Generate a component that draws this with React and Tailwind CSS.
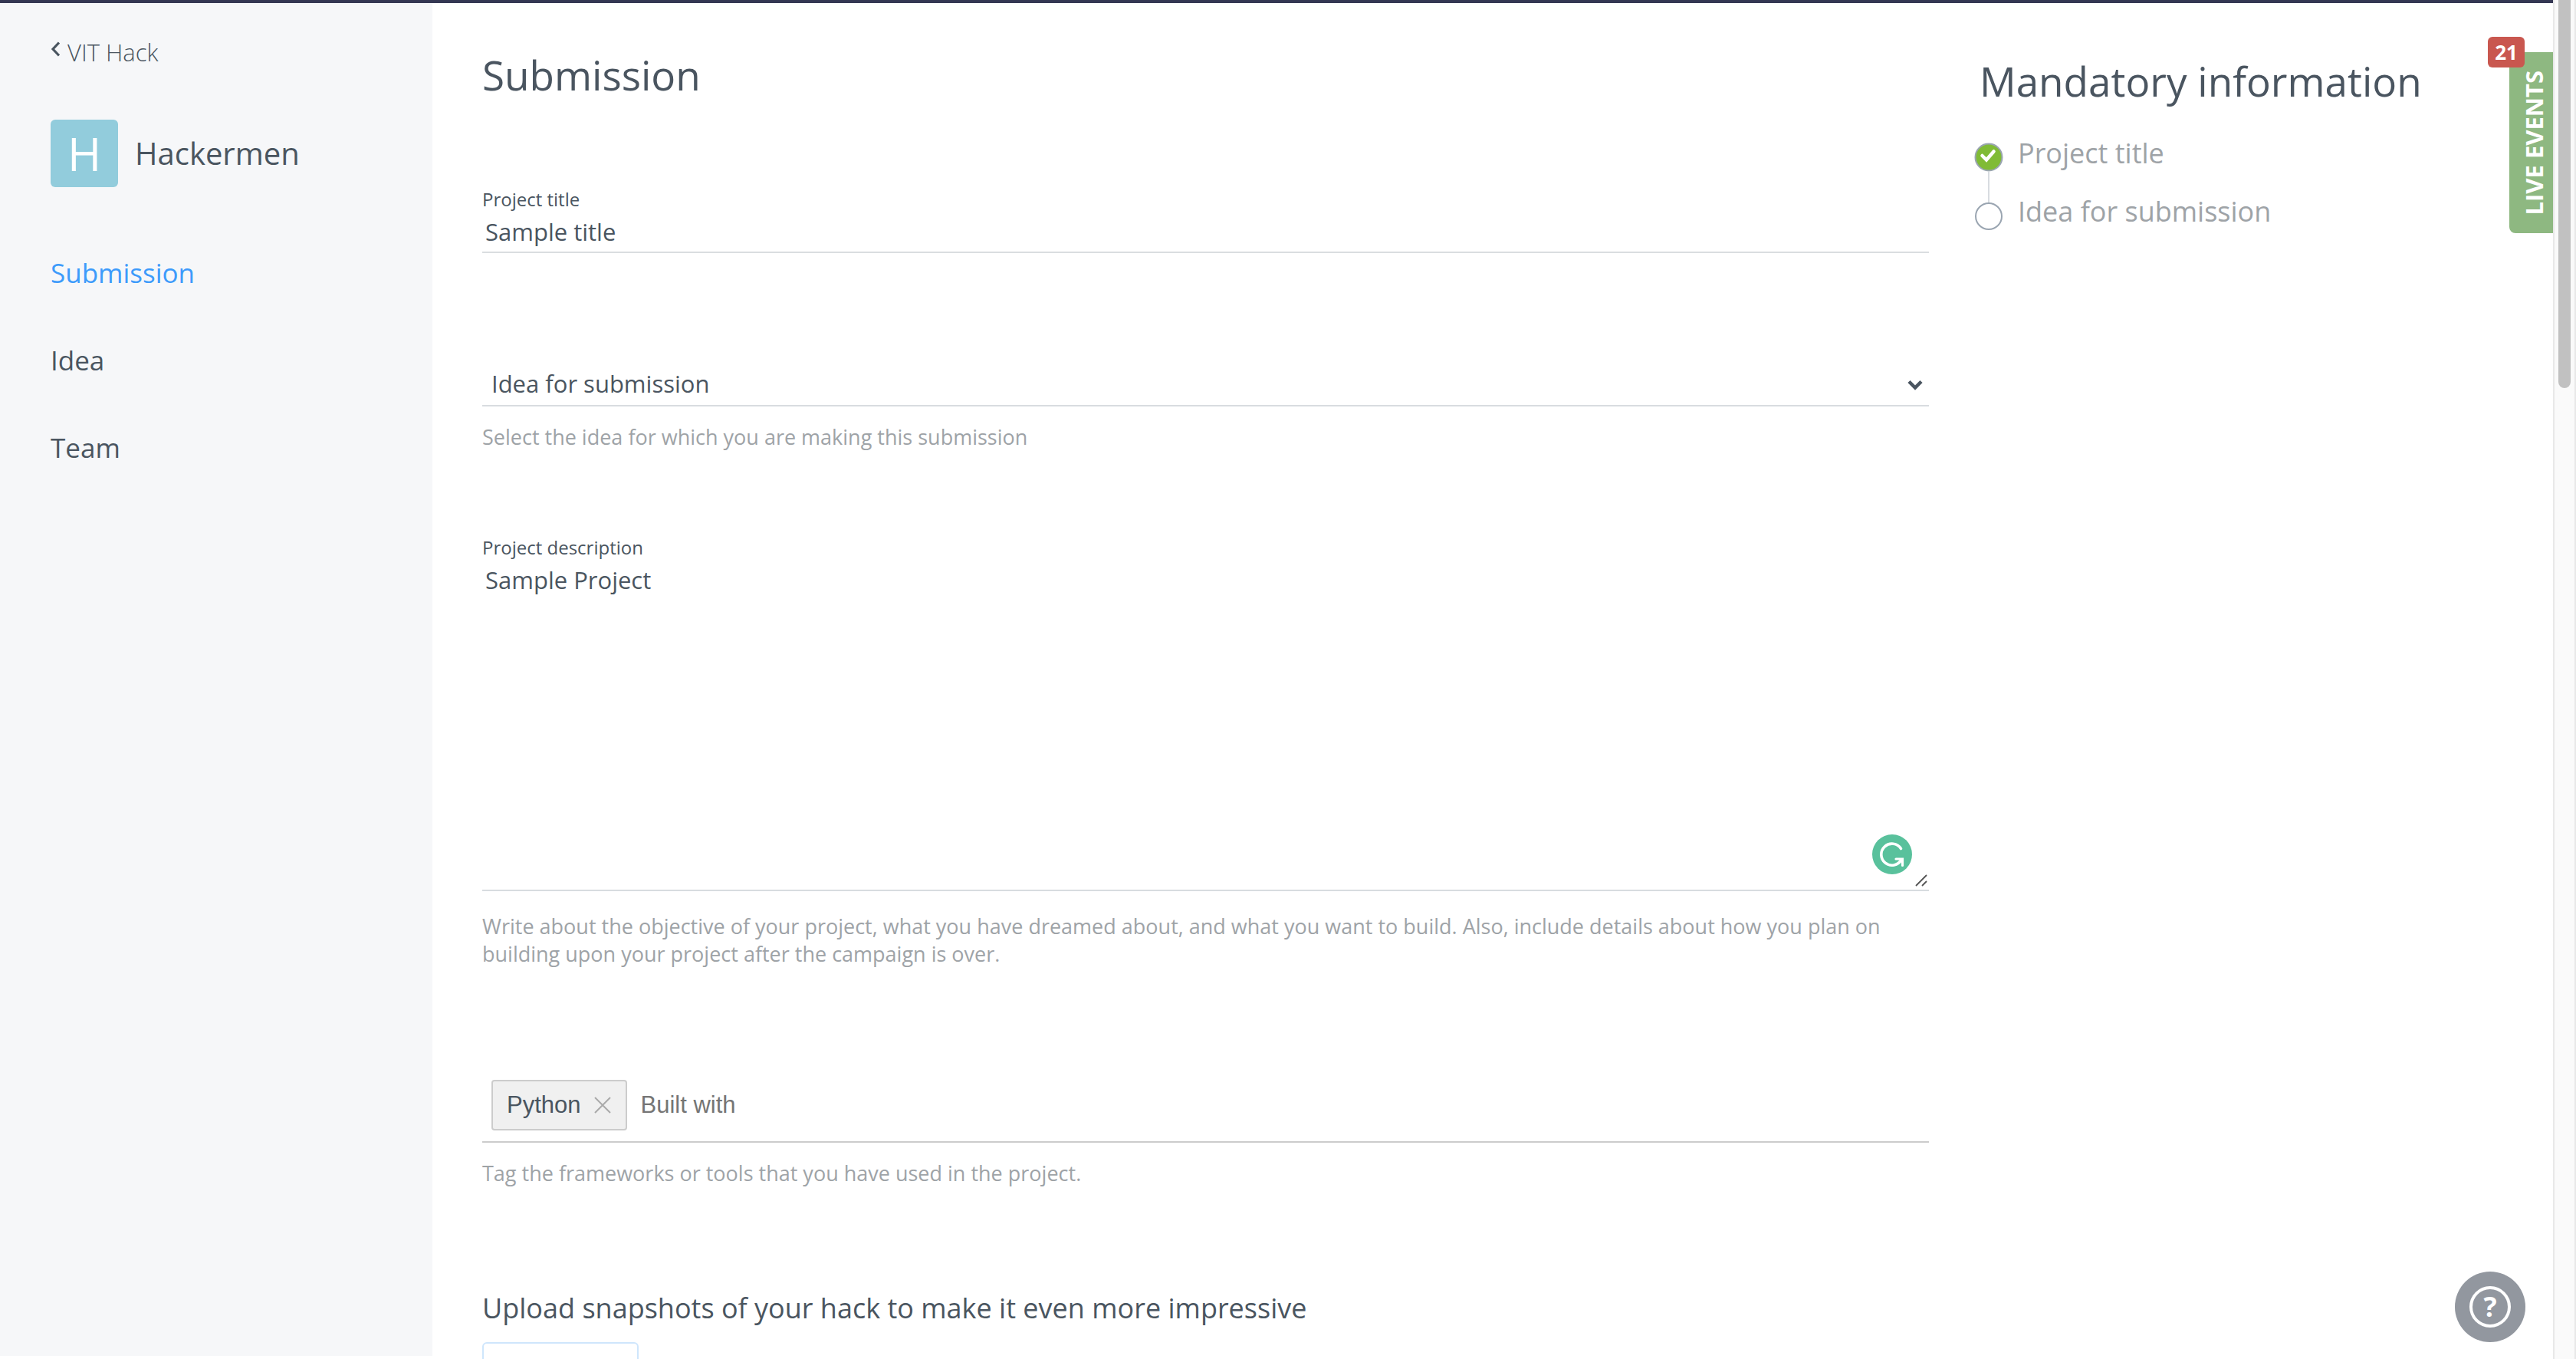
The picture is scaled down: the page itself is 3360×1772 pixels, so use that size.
import React from "react";

const navItems = [
  { label: "Submission", active: true },
  { label: "Idea", active: false },
  { label: "Team", active: false },
];

function Sidebar() {
  return (
    <aside className="mb-1 flex w-[564px] shrink-0 flex-col bg-[#f6f7f9] px-[66px] pt-10">
      <a href="#hack" className="flex items-center gap-2.5 text-[31px] leading-[48px] font-light">
        <svg width="12" height="20" viewBox="0 0 12 20" className="-mt-2" fill="none" stroke="currentColor" strokeWidth="3.2">
          <path d="M11 1.5 3 10l8 8.5" />
        </svg>
        VIT Hack
      </a>
      <div className="mt-16 flex items-center gap-[22px]">
        <div className="flex h-[88px] w-[88px] items-center justify-center rounded-md bg-[#92ccdc] text-[60px] leading-[88px] text-white">
          H
        </div>
        <span className="text-[40px] leading-[56px]">Hackermen</span>
      </div>
      <nav className="mt-[88px] flex flex-col gap-[66px] text-[35px] leading-[48px]">
        {navItems.map((item) => (
          <a key={item.label} href={"#" + item.label.toLowerCase()} className={item.active ? "text-[#3d9bfb]" : ""}>
            {item.label}
          </a>
        ))}
      </nav>
    </aside>
  );
}

function Help({ id, className, children }) {
  return (
    <p id={id} className={"text-[27px] leading-[36px] text-[#9ea3a7] " + className}>
      {children}
    </p>
  );
}

function SubmissionForm() {
  return (
    <form className="flex min-w-0 flex-1 flex-col pt-[58px]">
      <h1 className="text-[53px] leading-[72px]">Submission</h1>

      <div className="mt-[108px] flex flex-col">
        <label htmlFor="title" className="text-[24px] leading-[36px]">Project title</label>
        <input
          id="title"
          type="text"
          defaultValue="Sample title"
          className="h-[52px] w-full border-b-2 border-[#dadde0] px-1 pb-0.5 text-[31px] leading-[48px] outline-none"
        />
      </div>

      <div className="mt-[142px] flex flex-col">
        <div className="relative">
          <select
            aria-label="Idea for submission"
            aria-describedby="idea-help"
            className="h-[58px] w-full appearance-none border-b-2 border-[#d8dce0] bg-transparent px-3 text-[31px] outline-none"
          >
            <option>Idea for submission</option>
          </select>
          <svg width="20" height="14" viewBox="0 0 20 14" className="pointer-events-none absolute top-[23px] right-2" fill="none" stroke="currentColor" strokeWidth="4.5">
            <path d="m2 2.500 8 8 8-8" />
          </svg>
        </div>
        <Help id="idea-help" className="mt-[22px]">Select the idea for which you are making this submission</Help>
      </div>

      <div className="mt-[108px] flex flex-col">
        <label htmlFor="description" className="text-[24px] leading-[36px]">Project description</label>
        <div className="relative flex">
          <textarea
            id="description"
            defaultValue="Sample Project"
            className="h-[430px] w-full resize-none border-b-2 border-[#d8dce0] px-1 text-[31px] leading-[48px] outline-none"
          />
          <svg width="52" height="52" viewBox="0 0 52 52" className="absolute right-[22px] bottom-[22px]" fill="none">
            <circle cx="26" cy="26" r="26" fill="#59c19c" />
            <path d="M37.500 18.500A14 14 0 1 0 38 33" stroke="#fff" strokeWidth="3.600" strokeLinecap="round" />
            <path d="M31 32h8.500v8.500" stroke="#fff" strokeWidth="3.200" strokeLinecap="round" />
          </svg>
          <svg width="16" height="16" viewBox="0 0 16 16" className="absolute right-0.5 bottom-1.5" stroke="#555" strokeWidth="1.8">
            <path d="M1 15 15 1M9 15l6-6" />
          </svg>
        </div>
        <Help className="mt-7">
          Write about the objective of your project, what you have dreamed about, and what you want to build. Also, include details about how you plan on building upon your project after the campaign is over.
        </Help>
      </div>

      <div className="mt-[134px] flex flex-col">
        <div className="flex items-center gap-3.5 border-b-2 border-[#ccc] px-3 pt-3 pb-3.5 font-['Liberation_Sans',Arial,sans-serif] text-[31px]">
          <span className="flex h-[66px] items-center gap-4 rounded border-2 border-[#ccc] bg-[#f0f0f0] px-[18px] leading-[40px]">
            Python
            <button type="button" aria-label="Remove Python" className="flex">
              <svg width="24" height="24" viewBox="0 0 24 24" stroke="#aaa" strokeWidth="2">
                <path d="M2 2l20 20M22 2 2 22" />
              </svg>
            </button>
          </span>
          <input
            type="text"
            aria-label="Built with"
            placeholder="Built with"
            className="h-10 min-w-0 flex-1 px-1 outline-none placeholder:text-[#757575]"
          />
        </div>
        <Help className="mt-[22px]">Tag the frameworks or tools that you have used in the project.</Help>
      </div>

      <div className="mt-[134px] flex flex-col items-start">
        <h2 className="text-[36px] leading-[48px]">Upload snapshots of your hack to make it even more impressive</h2>
        <button type="button" aria-label="Add snapshot" className="mt-5 h-[200px] w-[204px] rounded-md border-2 border-[#cfe6fc]" />
      </div>
    </form>
  );
}

function Mandatory() {
  return (
    <aside className="w-[754px] shrink-0 pt-16">
      <h2 className="px-1.5 text-[53px] leading-[76px]">Mandatory information</h2>
      <ul className="mt-8 text-[36px] leading-[48px] text-[#9ea3a7]">
        <li className="flex gap-5">
          <div className="flex flex-col items-center pt-2.5">
            <svg width="38" height="38" viewBox="0 0 38 38" className="-mx-px">
              <circle cx="19" cy="19" r="17.500" fill="#80bb36" stroke="#9aa5b1" strokeWidth="2" />
              <path d="m10.500 17 5.500 5.500 9.500-11" fill="none" stroke="#fff" strokeWidth="4.500" strokeLinecap="round" />
            </svg>
            <div className="h-10 w-0.5 bg-[#d8dce0]" />
          </div>
          Project title
        </li>
        <li className="-mt-3 flex gap-5">
          <span className="mt-3 h-9 w-9 rounded-full border-2 border-[#9aa5b1]" />
          Idea for submission
        </li>
      </ul>
    </aside>
  );
}

function LiveEvents() {
  return (
    <button type="button" className="absolute top-16 right-0 flex h-[236px] w-[57px] items-center justify-end rounded-l-lg bg-[#8eb881] text-white">
      <span className="rotate-180 text-[31px] leading-[50px] font-bold [writing-mode:vertical-rl]">LIVE EVENTS</span>
      <span className="absolute -top-5 -left-7 flex h-10 w-12 items-center justify-center rounded-md bg-[#c9574f] text-[26px] font-bold">21</span>
    </button>
  );
}

export default function App() {
  return (
    <div className="flex h-screen overflow-hidden bg-white font-['Open_Sans','Noto_Sans',sans-serif] text-[#4a5560]">
      <div className="relative flex min-w-0 flex-1 border-t-4 border-[#343753]">
        <Sidebar />
        <main className="flex min-w-0 flex-1 gap-[60px] pl-[65px]">
          <SubmissionForm />
          <Mandatory />
        </main>
        <LiveEvents />
        <button type="button" aria-label="Help" className="absolute right-9 bottom-[22px] flex h-[92px] w-[92px] items-center justify-center rounded-full bg-[#92979f] text-white">
          <span className="flex h-[54px] w-[54px] items-center justify-center rounded-full border-4 border-white text-[36px] leading-[46px] font-bold">?</span>
        </button>
      </div>
      <div className="flex w-[30px] shrink-0 justify-center border-x-2 border-[#e8e8e8] bg-[#fafafa]">
        <div className="h-[506px] w-4 rounded-b-full bg-[#c1c1c1]" />
      </div>
    </div>
  );
}
